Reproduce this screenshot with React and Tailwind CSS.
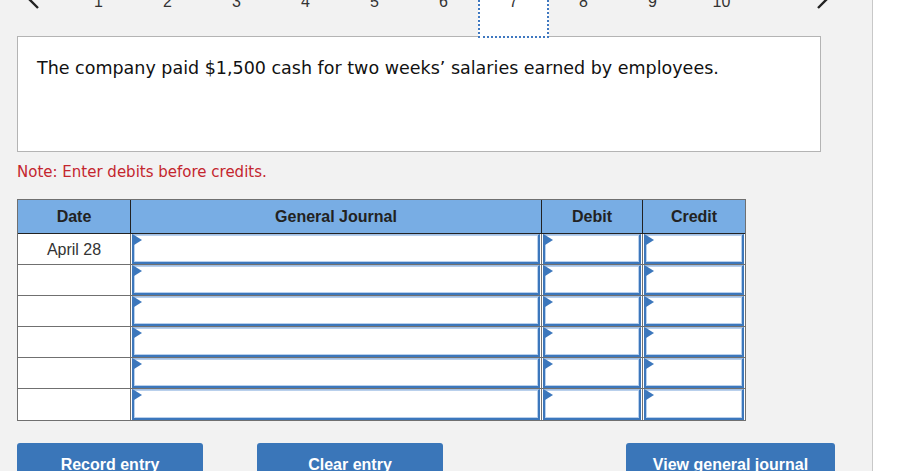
import React from "react";

const nums = [1, 2, 3, 4, 5, 6, 7, 8, 9, 10];

function InputBox() {
  return (
    <div className="relative h-full w-full border-x-2 border-b-2 border-t border-[#3c77bc] border-t-[#a3c0e4] bg-white shadow-[inset_0_0_0_1px_#b9d0ec]">
      <div className="absolute left-0 top-0 h-0 w-0 border-y-[5px] border-l-[8px] border-y-transparent border-l-[#3c77bc]" />
    </div>
  );
}

export default function App() {
  const rows = ["April 28", "", "", "", "", ""];
  return (
    <div className="flex h-[471px] w-[900px] overflow-hidden bg-white">
      <div className="w-[873px] shrink-0 border-r border-[#c8c8c8] bg-[#f2f2f2]">
        {/* nav */}
        <div className="-mt-[12px] flex h-[50px] items-start" style={{ fontFamily: "'Liberation Sans', Arial, sans-serif" }}>
          <div className="flex h-[24px] w-[64px] items-center justify-center pl-[4px]">
            <svg width="12" height="20" viewBox="0 0 12 20">
              <polyline points="10,2 2,10 10,18" fill="none" stroke="#222" strokeWidth="2.4" />
            </svg>
          </div>
          {nums.map((n) => (
            <div
              key={n}
              className={
                n === 7
                  ? "flex h-[50px] w-[71px] justify-center border-2 border-dotted border-[#3f78c0] bg-white pt-[0px] text-[16px] text-[#333]"
                  : "flex h-[50px] w-[69px] justify-center pt-[2px] text-[16px] text-[#333]"
              }
            >
              {n}
            </div>
          ))}
          <div className="flex h-[24px] flex-1 items-center justify-end pr-[44px]">
            <svg width="12" height="20" viewBox="0 0 12 20">
              <polyline points="2,2 10,10 2,18" fill="none" stroke="#222" strokeWidth="2.4" />
            </svg>
          </div>
        </div>

        {/* question box */}
        <div className="ml-[17px] -mt-[2px] h-[116px] w-[804px] border border-[#b4b4b4] bg-white pl-[19px] pt-[18px]">
          <p className="text-[17.5px] leading-[26px] text-[#111]" style={{ fontFamily: "'DejaVu Sans', Verdana, sans-serif" }}>
            The company paid $1,500 cash for two weeks’ salaries earned by employees.
          </p>
        </div>

        <p className="ml-[17px] mt-[9px] text-[15px] leading-[22px] text-[#c4262e]" style={{ fontFamily: "'DejaVu Sans', Verdana, sans-serif" }}>
          Note: Enter debits before credits.
        </p>

        {/* table */}
        <div
          className="ml-[17px] mt-[16px] w-[729px] border border-[#707070]"
          style={{ fontFamily: "'Liberation Sans', Arial, sans-serif" }}
        >
          <div className="grid h-[34px] grid-cols-[113px_411px_101px_102px] border-b border-[#222] bg-[#78ade4] text-[16px] font-bold text-[#222]">
            <div className="flex items-center justify-center border-r border-[#222]">Date</div>
            <div className="flex items-center justify-center border-r border-[#222]">General Journal</div>
            <div className="flex items-center justify-center border-r border-[#222]">Debit</div>
            <div className="flex items-center justify-center">Credit</div>
          </div>
          {rows.map((d, i) => (
            <div
              key={i}
              className={
                i < rows.length - 1
                  ? "grid h-[31px] grid-cols-[113px_411px_101px_102px] border-b border-[#707070]"
                  : "grid h-[31px] grid-cols-[113px_411px_101px_102px]"
              }
            >
              <div className="flex items-start justify-center border-r border-[#707070] bg-white pt-[4px] text-[16px] text-[#333]">
                {d}
              </div>
              <div className="border-r border-[#707070] bg-white pl-[1px] pr-[1px]">
                <InputBox />
              </div>
              <div className="border-r border-[#707070] bg-white pl-[1px] pr-[1px]">
                <InputBox />
              </div>
              <div className="bg-white pl-[1px] pr-[1px]">
                <InputBox />
              </div>
            </div>
          ))}
        </div>

        {/* buttons */}
        <div className="ml-[17px] mt-[22px] flex text-[16px] font-bold text-white" style={{ fontFamily: "'Liberation Sans', Arial, sans-serif" }}>
          <button className="h-[40px] w-[186px] rounded-t-[3px] bg-[#3a76b9] pt-[4px]">Record entry</button>
          <button className="ml-[54px] h-[40px] w-[186px] rounded-t-[3px] bg-[#3a76b9] pt-[4px]">Clear entry</button>
          <button className="ml-[183px] h-[40px] w-[209px] rounded-t-[3px] bg-[#3a76b9] pt-[4px]">View general journal</button>
        </div>
      </div>
      <div className="flex-1 bg-white" />
    </div>
  );
}
